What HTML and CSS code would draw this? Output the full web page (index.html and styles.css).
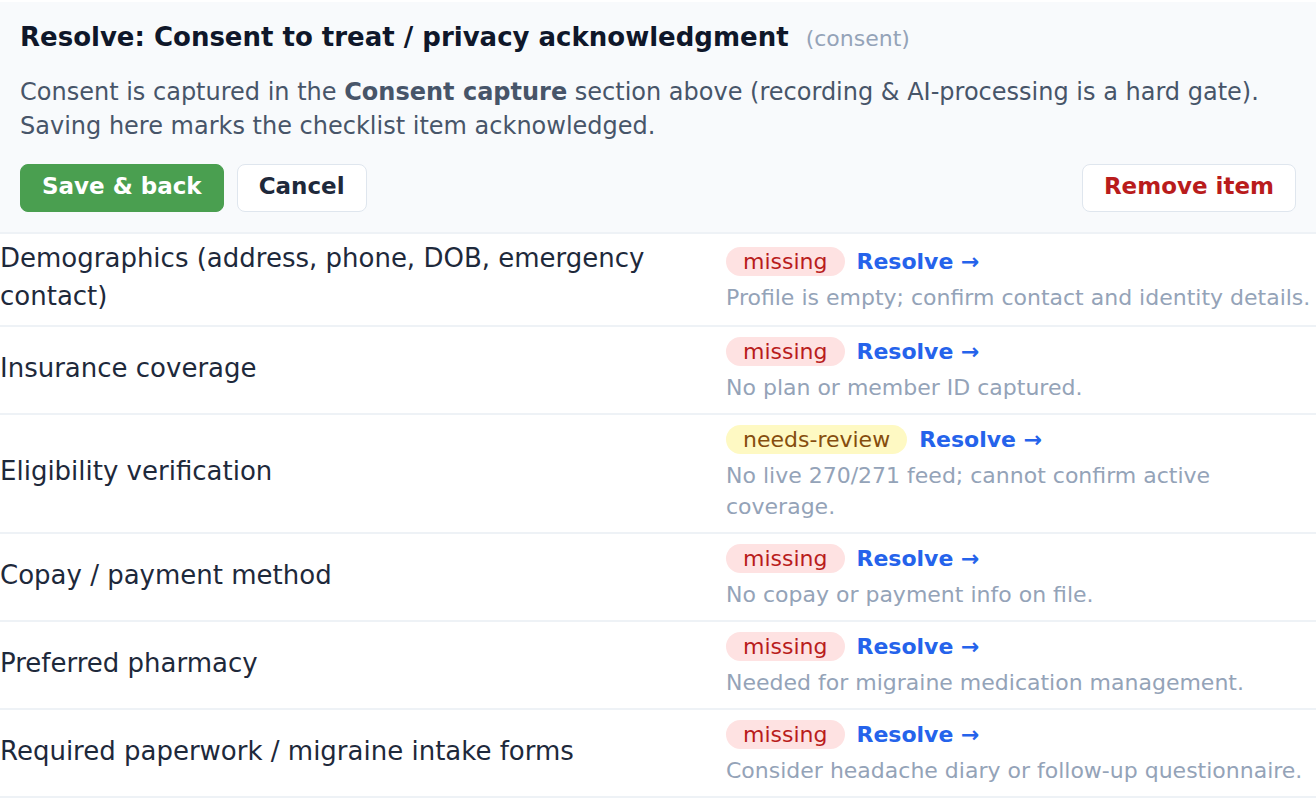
FILE: index.html
```
<!DOCTYPE html>
<html lang="en">
<head>
    <meta charset="UTF-8">
    <meta name="viewport" content="width=device-width, initial-scale=1.0">
    <title>Intake checklist - Resolve</title>
    <link rel="stylesheet" href="styles.css">
</head>
<body>
    <!-- Resolve panel -->
    <div class="resolve-panel">
        <div class="resolve-title">
            <h2>Resolve: Consent to treat / privacy acknowledgment</h2>
            <span class="item-key">(consent)</span>
        </div>
        <p class="resolve-text">
            Consent is captured in the <b>Consent capture</b> section above (recording &amp; AI-processing is a hard gate).
            Saving here marks the checklist item acknowledged.
        </p>
        <div class="resolve-actions">
            <button class="btn btn-save">Save &amp; back</button>
            <button class="btn btn-cancel">Cancel</button>
            <button class="btn btn-remove">Remove item</button>
        </div>
    </div>

    <!-- Checklist rows -->
    <div class="checklist">
        <div class="check-row">
            <div class="check-label">Demographics (address, phone, DOB, emergency contact)</div>
            <div class="check-status">
                <div class="status-line">
                    <span class="badge badge-missing">missing</span>
                    <a class="resolve-link" href="#">Resolve →</a>
                </div>
                <div class="hint">Profile is empty; confirm contact and identity details.</div>
            </div>
        </div>
        <div class="check-row">
            <div class="check-label">Insurance coverage</div>
            <div class="check-status">
                <div class="status-line">
                    <span class="badge badge-missing">missing</span>
                    <a class="resolve-link" href="#">Resolve →</a>
                </div>
                <div class="hint">No plan or member ID captured.</div>
            </div>
        </div>
        <div class="check-row">
            <div class="check-label">Eligibility verification</div>
            <div class="check-status">
                <div class="status-line">
                    <span class="badge badge-review">needs-review</span>
                    <a class="resolve-link" href="#">Resolve →</a>
                </div>
                <div class="hint">No live 270/271 feed; cannot confirm active coverage.</div>
            </div>
        </div>
        <div class="check-row">
            <div class="check-label">Copay / payment method</div>
            <div class="check-status">
                <div class="status-line">
                    <span class="badge badge-missing">missing</span>
                    <a class="resolve-link" href="#">Resolve →</a>
                </div>
                <div class="hint">No copay or payment info on file.</div>
            </div>
        </div>
        <div class="check-row">
            <div class="check-label">Preferred pharmacy</div>
            <div class="check-status">
                <div class="status-line">
                    <span class="badge badge-missing">missing</span>
                    <a class="resolve-link" href="#">Resolve →</a>
                </div>
                <div class="hint">Needed for migraine medication management.</div>
            </div>
        </div>
        <div class="check-row">
            <div class="check-label">Required paperwork / migraine intake forms</div>
            <div class="check-status">
                <div class="status-line">
                    <span class="badge badge-missing">missing</span>
                    <a class="resolve-link" href="#">Resolve →</a>
                </div>
                <div class="hint">Consider headache diary or follow-up questionnaire.</div>
            </div>
        </div>
    </div>
</body>
</html>
```

FILE: styles.css
```
body {
    font-family: "DejaVu Sans", Verdana, sans-serif;
    margin: 0;
    padding-top: 2px;
    background-color: white;
    color: #1e293b;
}
.resolve-panel {
    background-color: #f8fafc;
    padding: 20px;
    border-bottom: 2px solid #eef2f6;
}
.resolve-title {
    display: flex;
    align-items: baseline;
    gap: 17px;
    margin-bottom: 22px;
}
.resolve-title h2 {
    margin: 0;
    font-size: 26px;
    line-height: 31px;
    color: #0f172a;
}
.item-key {
    font-size: 22px;
    color: #94a3b8;
}
.resolve-text {
    margin: 0 0 21px;
    font-size: 24px;
    line-height: 34px;
    color: #475569;
}
.resolve-actions {
    display: flex;
    gap: 13px;
}
.btn {
    font-family: inherit;
    font-size: 23px;
    font-weight: bold;
    line-height: 28px;
    padding: 7px 21px 11px;
    border: 1px solid #dfe6ee;
    border-radius: 8px;
    background-color: white;
    color: #1e293b;
    cursor: pointer;
}
.btn-save {
    background-color: #4a9f50;
    border-color: #4a9f50;
    color: white;
}
.btn-remove {
    margin-left: auto;
    color: #b91c1c;
}
.check-row {
    display: grid;
    grid-template-columns: 714px 1fr;
    align-items: center;
    border-bottom: 2px solid #eef2f6;
}
.check-label {
    font-size: 26px;
    line-height: 38px;
    padding: 5px 0 10px;
    color: #1e293b;
}
.check-status {
    padding: 10px 0 10px 12px;
}
.status-line {
    display: flex;
    align-items: center;
    gap: 12px;
    height: 29px;
    margin-bottom: 6px;
}
.badge {
    font-size: 22px;
    line-height: 25px;
    padding: 2px 17px;
    border-radius: 15px;
}
.badge-missing {
    background-color: #fee2e2;
    color: #b91c1c;
}
.badge-review {
    background-color: #fef9c3;
    color: #854d0e;
}
.resolve-link {
    font-size: 22px;
    font-weight: bold;
    color: #2563eb;
    text-decoration: none;
}
.hint {
    font-size: 22px;
    line-height: 31px;
    color: #94a3b8;
}
```
